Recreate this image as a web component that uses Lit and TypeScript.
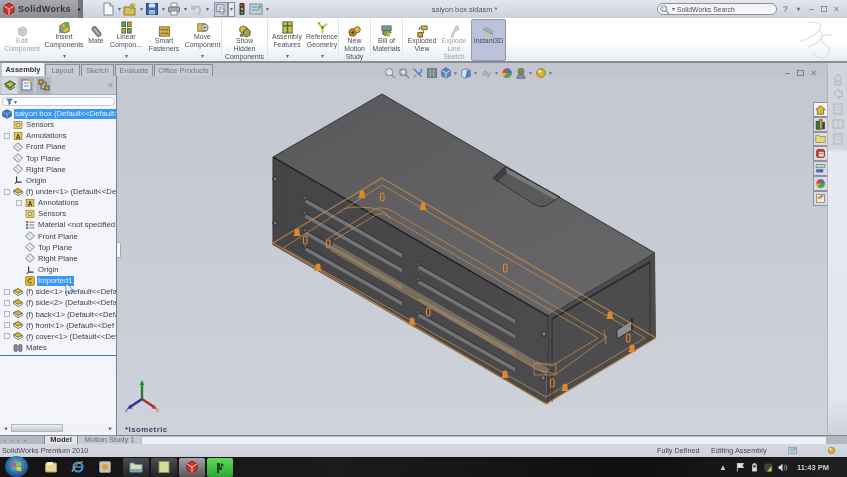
import { LitElement, html, css, svg } from "lit";
import { customElement } from "lit/decorators.js";

// small colour icons, all on a 14x14 box
const ICONS: Record<string, any> = {
  doc: svg`<path d="M3 1h6l3 3v9H3z" fill="#fbfcff" stroke="#7d8594"/><path d="M9 1v3h3" fill="#d5dbe8" stroke="#7d8594"/>`,
  open: svg`<path d="M1 5h5l1 1h5v7H1z" fill="#d9c04c" stroke="#8b7a2a"/><path d="M6 4l3-3 3 2-1 3z" fill="#7fb04a"/><circle cx="11" cy="2.5" r="1.5" fill="#e2c43e"/>`,
  save: svg`<rect x="1.5" y="1.5" width="11" height="11" fill="#3c6ab0" stroke="#28457c"/><rect x="4" y="1.5" width="6" height="4" fill="#dfe6f4"/><rect x="4" y="8" width="6" height="4.5" fill="#9db5da"/>`,
  print: svg`<path d="M4 1h6v4H4z" fill="#f2f3f6" stroke="#8c9099"/><rect x="1.5" y="5" width="11" height="5" rx="1" fill="#a4a8b2" stroke="#737780"/><path d="M4 9h6v4H4z" fill="#f0f1f4" stroke="#8c9099"/>`,
  undo: svg`<path d="M3 3v4h4M3.5 7C5 3.5 10 3.5 11 7c.6 2.2-.6 4-2 5" fill="none" stroke="#b3b8c4" stroke-width="1.6"/>`,
  select: svg`<rect x="1.5" y="2" width="9" height="8" fill="#cfd6e6" stroke="#7e8595"/><path d="M6 5l6 4-3 .6L10.6 13l-1.4.6-1.5-3.3L6 12z" fill="#f4f5f8" stroke="#555"  stroke-width=".6"/>`,
  traffic: svg`<rect x="4.5" y="1" width="5" height="12" rx="1.2" fill="#3b3b3e"/><circle cx="7" cy="3.3" r="1.3" fill="#d83a2e"/><circle cx="7" cy="7" r="1.3" fill="#d9a52c"/><circle cx="7" cy="10.7" r="1.3" fill="#45a84a"/>`,
  options: svg`<rect x="1" y="2" width="12" height="10" fill="#c3d3df" stroke="#7b8a98"/><path d="M3 5h5M3 8h7" stroke="#5e93a8"/><rect x="9" y="3.5" width="3" height="3" fill="#72ab8c"/>`,
  edit: svg`<path d="M3 4l4-2 4 2v6l-4 2-4-2z" fill="#d3d4d8" stroke="#b2b4ba"/><path d="M3 4l4 2 4-2M7 6v6" fill="none" stroke="#b2b4ba"/>`,
  insert: svg`<path d="M2 5l5-3 5 3v6l-5 2-5-2z" fill="#d9c045" stroke="#74662a"/><path d="M2 5l5 3 5-3" fill="none" stroke="#74662a"/><path d="M7 1h5v5H7z" fill="#6fa856"/><path d="M1 8h5v5H1z" fill="#5f8fc2" opacity=".8"/>`,
  mate: svg`<g transform="rotate(-40 7 7)"><rect x="4.5" y="1" width="5" height="12" rx="2.5" fill="#8d8f96" stroke="#5f6067"/><path d="M7 3v8" stroke="#c2c4ca"/></g>`,
  linear: svg`<rect x="2" y="1" width="4" height="5" fill="#67a84a" stroke="#2f6a2a"/><rect x="8" y="1" width="4" height="5" fill="#c0a83a" stroke="#6d6024"/><rect x="2" y="8" width="4" height="5" fill="#c0a83a" stroke="#6d6024"/><rect x="8" y="8" width="4" height="5" fill="#67a84a" stroke="#2f6a2a"/>`,
  smart: svg`<rect x="1.5" y="2" width="11" height="10" fill="#cfae4e" stroke="#85712c"/><path d="M3 5h8M3 9h8" stroke="#6a5a28" stroke-width="1.4" stroke-dasharray="2 1"/>`,
  move: svg`<rect x="2" y="3" width="8" height="8" fill="#ddc25c" stroke="#7b6a2a"/><circle cx="9.5" cy="7" r="3.5" fill="#e9e9ec" stroke="#666"/><path d="M9.5 5v4M7.5 7h4" stroke="#666"/>`,
  hidden: svg`<path d="M2 3l4-2 4 2v4L6 9 2 7z" fill="#d8bf4c" stroke="#6a5c25"/><path d="M6 6l4-2 3 2v5l-4 2-3-2z" fill="#a7a14c" stroke="#57522a"/><circle cx="4" cy="11" r="2" fill="#77787e"/>`,
  features: svg`<rect x="2" y="1" width="10" height="12" fill="#d3bd4c" stroke="#5e5a24"/><path d="M2 5h10M7 1v12" stroke="#3f7d3a" stroke-width="1.6"/>`,
  reference: svg`<path d="M7 7L2 2M7 7l5-4M7 7v6" stroke="#d7bf32" stroke-width="2"/><circle cx="7" cy="7" r="1.5" fill="#4f8a3c"/><path d="M2 3l3-2" stroke="#4f8a3c"/>`,
  motion: svg`<circle cx="5" cy="8" r="4" fill="#c88f2c" stroke="#6d4c17"/><circle cx="10" cy="5" r="3.2" fill="#e0bf46" stroke="#6d5a17"/><circle cx="5" cy="8" r="1.3" fill="#3e2f13"/>`,
  bom: svg`<rect x="2" y="1" width="10" height="5" fill="#8b939e" stroke="#5f6670"/><path d="M3 7l5-2 4 3-4 4-5-2z" fill="#6cab4c" stroke="#3f6d2f"/><path d="M8 8l4 1-2 4-3-2z" fill="#d4b63c"/>`,
  exploded: svg`<path d="M6 1h6v4H6z" fill="#d6bd40" stroke="#6a5e24"/><path d="M2 8h5v5H2z" fill="#c8a93a" stroke="#635520"/><path d="M3 5l2-3M8 6v3" stroke="#5a7a3a" stroke-width="1.3"/>`,
  explodeline: svg`<path d="M3 13l3-6 2-5 3-1-1 5-3 2-2 5z" fill="#d8d9de" stroke="#b5b7be"/><path d="M9 3l3 2" stroke="#bfc1c8" stroke-width="1.5"/>`,
  instant: svg`<path d="M1 3l11 6v2L1 5z" fill="#6aa6c2"/><path d="M1 5l11 6v2L1 7z" fill="#d4c75a"/><path d="M3 2l9 5" stroke="#7c8396"/>`,
  tree: svg`<path d="M2 6l5-3 5 3-5 4z" fill="#d1b63f" stroke="#3b6b34" stroke-width="1.4"/><path d="M2 8l5 4 5-3" fill="none" stroke="#3b6b34"/>`,
  prop: svg`<rect x="2" y="2" width="9" height="10" fill="#f2f3f8" stroke="#4c70a4"/><path d="M4 5h5M4 8h5" stroke="#7e8aa0"/><rect x="9" y="1" width="3" height="3" fill="#d8b63f"/>`,
  config: svg`<rect x="2" y="2" width="4" height="4" fill="#cfb13c" stroke="#5a5021"/><rect x="8" y="8" width="4" height="4" fill="#cfb13c" stroke="#5a5021"/><path d="M6 4h3v4M4 6v5h4" fill="none" stroke="#55604a"/>`,
  funnel: svg`<path d="M1 2h12L8.5 7v5L5.5 13V7z" fill="#4d86c6" stroke="#2a5b96"/>`,
  root: svg`<path d="M1 4l6-3 6 3v6l-6 3-6-3z" fill="#3f78c0" stroke="#1e4a86"/><path d="M1 4l6 3 6-3M7 7v6" fill="none" stroke="#9dc0ea"/>`,
  sensors: svg`<rect x="1.5" y="2" width="11" height="10" fill="#e5cf6b" stroke="#9a8431"/><circle cx="7" cy="7" r="2.5" fill="#f1e8b6" stroke="#7e6f35"/>`,
  annot: svg`<rect x="1.5" y="2" width="11" height="10" fill="#e2c54e" stroke="#95802a"/><text x="7" y="11" font-size="9" font-weight="700" font-family="Liberation Sans" text-anchor="middle" fill="#3c3c3c">A</text>`,
  plane: svg`<path d="M0.5 7L7 1l6.500 6L7 13z" fill="none" stroke="#7e828c" stroke-width="1.200"/><path d="M3.500 4l6.500 6.500M1.500 7l5.500 5.500M6.500 1.500L12.500 7.500" stroke="#8e9199"/>`,
  origin: svg`<path d="M5 2v8h7" fill="none" stroke="#333" stroke-width="1.6"/><path d="M5 10l-2.500 2.500" stroke="#b9372c" stroke-width="1.6"/><circle cx="5" cy="10" r="1.3" fill="#b9372c"/>`,
  part: svg`<path d="M1 5l6-3 6 4-6 3z" fill="#d4b63c" stroke="#4e4620"/><path d="M1 8l6 4 6-3M1 5v3M13 6v3" fill="none" stroke="#4e4620"/>`,
  material: svg`<path d="M6 3h7M6 7h7M6 11h7" stroke="#5c6472" stroke-width="1.2"/><rect x="1.5" y="1.5" width="3" height="3" fill="#c94a3b"/><rect x="1.5" y="5.5" width="3" height="3" fill="#4a9a4f"/><rect x="1.5" y="9.5" width="3" height="3" fill="#3f73c4"/>`,
  sketch: svg`<rect x="1" y="1" width="12" height="12" rx="1.5" fill="#e4bf2f" stroke="#7c6414"/><path d="M9.500 4.500C6 3 4 5 4.500 7.500S8 10.500 9.500 9" fill="none" stroke="#4b3c10" stroke-width="1.3"/>`,
  mates: svg`<rect x="1.5" y="2" width="4.5" height="10" rx="2" fill="#8a8c92" stroke="#55565c"/><rect x="8" y="2" width="4.5" height="10" rx="2" fill="#8a8c92" stroke="#55565c"/>`,
  zoomfit: svg`<circle cx="6" cy="6" r="4" fill="#dfe3ea" stroke="#8b909b" stroke-width="1.2"/><path d="M9 9l4 4" stroke="#8b909b" stroke-width="1.6"/>`,
  zoomarea: svg`<circle cx="6" cy="6" r="4" fill="none" stroke="#7f8794" stroke-width="1.2"/><path d="M9 9l4 4" stroke="#7f8794" stroke-width="1.6"/><rect x="4" y="4" width="4" height="4" fill="#eef0f4" stroke="#9aa0aa" stroke-width=".6"/>`,
  prev: svg`<path d="M2 2l9 9M11 2c1 4-2 6-5 6" fill="none" stroke="#4d7fb8" stroke-width="1.5"/><path d="M2 12l3-3" stroke="#8b8f99" stroke-width="1.5"/>`,
  section: svg`<rect x="2" y="2" width="10" height="10" fill="#6a90bf" stroke="#3d5f8c"/><path d="M5 2v10M9 2v10" stroke="#c9a93c" stroke-width="1.4"/>`,
  orient: svg`<path d="M2 4l5-3 5 3v6l-5 3-5-3z" fill="#5f8cc2" stroke="#3a5f90"/><path d="M2 4l5 3 5-3M7 7v6" fill="none" stroke="#d7e3f2"/>`,
  display: svg`<path d="M2 4l6-2 4 2v7l-6 2-4-2z" fill="#dfe6f0" stroke="#5c7ca8"/><path d="M8 3.500l4 .5v7l-6 2z" fill="#4f83c4"/>`,
  sphere: svg`<circle cx="7" cy="7" r="5.500" fill="#d8463a"/><path d="M7 7V1.500A5.500 5.500 0 0 1 12.500 7z" fill="#3f78c8"/><path d="M7 7h5.500A5.500 5.500 0 0 1 3 11z" fill="#4aa84c"/><path d="M7 7L3 11A5.500 5.500 0 0 1 1.500 7z" fill="#e0c23c"/>`,
  scene: svg`<circle cx="7" cy="5" r="3.500" fill="#5aa052" stroke="#c34a3c"/><path d="M2 13l2-4h6l2 4z" fill="#8690c4" stroke="#5c5f86"/>`,
  bulb: svg`<circle cx="7" cy="7" r="5" fill="#d9b22e" stroke="#8d7418"/><circle cx="5.500" cy="5" r="1.800" fill="#f7eeb0"/>`,
  home: svg`<path d="M1 7l6-5 6 5h-2v6H3V7z" fill="#d8b93f" stroke="#6f5e1e"/>`,
  lib: svg`<rect x="1.5" y="3" width="3.500" height="10" fill="#3e7e45" stroke="#1f4224"/><rect x="5.500" y="1" width="3.500" height="12" fill="#c8ad3a" stroke="#4f4518"/><rect x="9.500" y="4" width="3" height="9" fill="#33393f"/>`,
  folder: svg`<path d="M1 3h4l1 1.500h7V12H1z" fill="#ecd872" stroke="#9a8838"/>`,
  custom: svg`<rect x="2" y="2" width="10" height="10" rx="2" fill="#c9473c" stroke="#7b2a24"/><path d="M5 5h6v6H5z" fill="#e7e0de"/><path d="M6 7h4" stroke="#b33"/>`,
  list: svg`<rect x="1.5" y="2" width="11" height="4" fill="#e9edf2" stroke="#6b7686"/><rect x="1.5" y="8" width="9" height="4" fill="#3f6cbc"/><path d="M3 4h8" stroke="#79aa4e"/>`,
  pen: svg`<rect x="2" y="2" width="10" height="10" fill="#efe9dc" stroke="#85807a"/><path d="M3 6l6-4 2 2-6 4z" fill="#c98c3c"/>`,
  ghost1: svg`<path d="M4 13V6l3-4 3 4v7z" fill="none" stroke="#aeb1b9"/><rect x="3" y="8" width="8" height="3" fill="#c2c5cc"/>`,
  ghost2: svg`<path d="M3 6l5-4v2.500h3v5H8V12z" fill="none" stroke="#aeb1b9"/>`,
  ghost3: svg`<rect x="3" y="2" width="8" height="10" fill="none" stroke="#aeb1b9"/><path d="M5 5h4M5 8h4" stroke="#bdc0c7"/>`,
  ghost4: svg`<rect x="2" y="3" width="10" height="8" fill="none" stroke="#aeb1b9"/><path d="M7 3v8" stroke="#bdc0c7"/>`,
  flag: svg`<path d="M3 2v10M3 2h8l-2 2.500 2 2.500H3" fill="#e4e4e4" stroke="#e4e4e4"/>`,
  batt: svg`<rect x="4" y="3" width="6" height="9" fill="#ddd"/><rect x="5.500" y="1.500" width="3" height="2" fill="#ddd"/><rect x="5" y="4" width="4" height="3" fill="#555"/>`,
  net: svg`<rect x="2" y="2" width="10" height="10" fill="#3d4146"/><path d="M5 12l6-7v7z" fill="#d8bd2e"/>`,
  vol: svg`<path d="M2 5h2l3-3v10L4 9H2z" fill="#ddd"/><path d="M9 4c1.500 2 1.500 4 0 6M11 3c2 2.500 2 5.500 0 8" fill="none" stroke="#aaa"/>`,
  ie: svg`<circle cx="7" cy="7" r="4.500" fill="none" stroke="#3f8ed8" stroke-width="2.2"/><path d="M3 7h8" stroke="#3f8ed8" stroke-width="1.5"/><path d="M12 2C9 1 3 6 1 12" fill="none" stroke="#e5c13c"/>`,
  explorer: svg`<rect x="1.5" y="3" width="11" height="9" rx="1" fill="#e7d793" stroke="#ad9a57"/><rect x="3" y="2" width="6" height="3" fill="#f4efd8"/>`,
  media: svg`<rect x="1.5" y="1.5" width="11" height="11" rx="1.5" fill="#c9c4b8" stroke="#8d8a7f"/><circle cx="7" cy="7" r="3" fill="#e09a3a"/>`,
  files: svg`<path d="M1 3h4l1 1.500h7V12H1z" fill="#dcdca6" stroke="#6d93a8"/><rect x="1" y="9" width="12" height="3" fill="#78a8c2"/>`,
  note: svg`<rect x="2" y="1.500" width="10" height="11" fill="#d9dc96" stroke="#90935a"/>`,
  cube: svg`<path d="M2 4l5-3 5 3v6l-5 3-5-3z" fill="#d2312a" stroke="#8e1d18"/><path d="M2 4l5 3 5-3M7 7v6" fill="none" stroke="#f0c9c6"/>`,
  bucket: svg`<path d="M4 3h3v4h2v3H6v3H4z" fill="#26441f"/><circle cx="9" cy="5" r="1.500" fill="#26441f"/>`,
};

const icon = (name: string, cls = "ic") =>
  html`<svg class=${cls} viewBox="0 0 14 14">${ICONS[name]}</svg>`;

const RIBBON = [
  { icon: "edit", lines: ["Edit", "Component"], off: true },
  { icon: "insert", lines: ["Insert", "Components"], arrow: true },
  { icon: "mate", lines: ["Mate"] },
  { icon: "linear", lines: ["Linear", "Compon..."], arrow: true },
  { icon: "smart", lines: ["Smart", "Fasteners"] },
  { icon: "move", lines: ["Move", "Component"], arrow: true, end: true },
  { icon: "hidden", lines: ["Show", "Hidden", "Components"], end: true },
  { icon: "features", lines: ["Assembly", "Features"], arrow: true },
  { icon: "reference", lines: ["Reference", "Geometry"], arrow: true, end: true },
  { icon: "motion", lines: ["New", "Motion", "Study"], end: true },
  { icon: "bom", lines: ["Bill of", "Materials"], end: true },
  { icon: "exploded", lines: ["Exploded", "View"] },
  { icon: "explodeline", lines: ["Explode", "Line", "Sketch"], off: true },
  { icon: "instant", lines: ["Instant3D"], active: true },
];

const TREE: [number, string, string, boolean?, boolean?][] = [
  [0, "root", "saiyon box  (Default<<Default>", false, true],
  [1, "sensors", "Sensors"],
  [1, "annot", "Annotations", true],
  [1, "plane", "Front Plane"],
  [1, "plane", "Top Plane"],
  [1, "plane", "Right Plane"],
  [1, "origin", "Origin"],
  [1, "part", "(f) under<1>  (Default<<De", true],
  [2, "annot", "Annotations", true],
  [2, "sensors", "Sensors"],
  [2, "material", "Material <not specified"],
  [2, "plane", "Front Plane"],
  [2, "plane", "Top Plane"],
  [2, "plane", "Right Plane"],
  [2, "origin", "Origin"],
  [2, "sketch", "Imported1", false, true],
  [1, "part", "(f) side<1>  (Default<<Defa", true],
  [1, "part", "(f) side<2>  (Default<<Defa", true],
  [1, "part", "(f) back<1>  (Default<<Defa", true],
  [1, "part", "(f) front<1>  (Default<<Def", true],
  [1, "part", "(f) cover<1>  (Default<<Def", true],
  [1, "mates", "Mates"],
];

const SLOTS = [
  [305, 198], [305, 213], [305, 230], [305, 246],
  [418, 264], [418, 279], [418, 296], [418, 312],
];

// label glyphs of the sketch, page coordinates
const MARKS = [
  [362, 195], [382, 197, 1], [423, 207], [297, 233], [305, 240, 1], [328, 244, 1],
  [318, 268], [428, 312, 1], [412, 322], [505, 268, 1], [610, 316], [628, 338, 1],
  [632, 349], [565, 388], [552, 383, 1], [505, 375],
];

const model = svg`
  <defs>
    <linearGradient id="top" x1="0" y1="0" x2="1" y2="1">
      <stop offset="0" stop-color="#59595b"/><stop offset="1" stop-color="#68686a"/>
    </linearGradient>
    <linearGradient id="side" x1="0" y1="0" x2="1" y2="0">
      <stop offset="0" stop-color="#454547"/><stop offset="1" stop-color="#4b4b4d"/>
    </linearGradient>
  </defs>
  <polygon points="382,94 655,253 548,316 273,157" fill="url(#top)"/>
  <polygon points="273,157 548,316 546,404 273,245" fill="url(#side)"/>
  <polygon points="548,316 655,253 656,338 546,404" fill="#4c4c4e"/>
  <polygon points="493,178 505,167 560,197 543,207" fill="#59595b"/>
  <polygon points="505,167 560,197 556,200 507,173" fill="#7b7b7d"/>
  <polygon points="493,178 505,167 507,173 497,182" fill="#3f3f41"/>
  <path d="M493 178L505 167L560 197L546 206Q540 208 534 204L493 178" fill="none" stroke="#303032"/>
  ${SLOTS.map(([x, y]) => svg`
    <polygon points="${x},${y} ${x + 97},${y + 55} ${x + 97},${y + 60} ${x},${y + 5}" fill="#737375"/>
    <path d="M${x} ${y}L${x + 97} ${y + 55}" stroke="#303032"/>
    <path d="M${x} ${y + 5}L${x + 97} ${y + 60}" stroke="#404042" stroke-width=".7"/>
    <circle cx=${x} cy=${y} r="2.200" fill="#59595b" stroke="#303032" stroke-width=".8"/>
  `)}
  <polygon points="617,330 632,320 632,330 617,339" fill="#8c8c8e" stroke="#2f2f31"/>
  <path d="M632 318v14" stroke="#242426" stroke-width="1.5"/>
  <g fill="#77787a" stroke="#262628">
    <circle cx="275" cy="179" r="2.200"/><circle cx="275" cy="223" r="2.200"/>
    <circle cx="544" cy="334" r="2.400"/><circle cx="543" cy="378" r="2.400"/>
  </g>
  <path d="M273 157L382 94L655 253L548 316Z" fill="none" stroke="#353537"/>
  <path d="M273 157L548 316" stroke="#1f1f21" stroke-width="1.3"/>
  <path d="M552 319L650 262" stroke="#2a2a2c" stroke-width="2"/>
  <path d="M552 319V402M650 260V340M548 316V404M273 157V245" stroke="#2e2e30"/>
  <path d="M332 246L548 372" stroke="#99866a" stroke-width="7" opacity=".6"/>
  <g fill="none" stroke="#cf8d45" opacity=".75">
    <path d="M273 243L382 178L656 338L546 404Z" stroke-width="1.3"/>
    <path d="M283 248L382 185L645 338L546 397L283 248"/>
    <path d="M326 240L373 210Q382 205 392 211L607 337L556 374L538 370L330 250"/>
    <path d="M334 240L376 215Q382 212 388 216L598 338L552 366L536 362"/>
    <path d="M340 213Q341 207 358 207Q386 207 390 219"/>
    <path d="M534 364h22v11h-22zM604 330l2 14"/>
  </g>
  <g fill="#dc8a2e">
    ${MARKS.map(([x, y, v]) => v
      ? svg`<rect x=${x - 1.5} y=${y - 4} width="3.500" height="8" rx="1.500" fill="none" stroke="#dc8a2e" stroke-width="1.100"/>`
      : svg`<path d="M${x - 4} ${y + 3}h8l-1.500-2v-3a2.500 2.500 0 0 0-5 0v3z"/>`)}
  </g>
  <g stroke-width="2.400" fill="none">
    <path d="M142 399V384" stroke="#2c7a34"/>
    <path d="M142 399L154 407" stroke="#a83232"/>
    <path d="M142 399L130 407" stroke="#2e2f9a"/>
  </g>
  <path d="M142 380l-2.500 5h5z" fill="#2c8a34"/>
  <path d="M157 409l-5.500-.5 2.500-4z" fill="#c03a3a"/>
  <path d="M127 409l5.500-.5-2.500-4z" fill="#3335b0"/>
  <text x="125" y="412" font-size="6" fill="#4a4ad0" font-family="Liberation Sans">z</text>
  <text x="156" y="412" font-size="6" fill="#c04a4a" font-family="Liberation Sans">x</text>
`;

@customElement("app-root")
export class AppRoot extends LitElement {
  static styles = css`
    :host { display: block; width: 847px; height: 477px; overflow: hidden; font-family: "Liberation Sans", Arial, sans-serif; color: #444; }
    .app { display: flex; flex-direction: column; height: 477px; filter: blur(0.45px); background: #c8ccd4; }
    .ic { width: 14px; height: 14px; display: block; flex: none; }
    .caret { font-size: 6px; color: #666; line-height: 1; }

    .titlebar { height: 18px; flex: none; display: flex; align-items: center; background: linear-gradient(#e4e7f1, #cdd1dd); }
    .logo { width: 78px; height: 18px; display: flex; align-items: center; gap: 2px; padding-left: 2px; box-sizing: border-box; background: linear-gradient(#a9a9ae, #8d8e93); font-size: 9px; font-weight: 700; letter-spacing: 0.35px; color: #35353a; }
    .logo-arrow { width: 5px; height: 18px; margin-right: 18px; background: #75767c; color: #222; font-size: 6px; line-height: 18px; }
    .qa { width: 22px; display: flex; align-items: center; gap: 1px; }
    .qa .caret { margin-left: 2px; }
    .qa-select { width: 14px; height: 15px; margin-left: 3px; background: #c5cbdc; border: 1px solid #8b909c; box-sizing: border-box; display: flex; align-items: center; justify-content: center; }
    .qa-select .ic { width: 12px; height: 12px; }
    .qa-drop { width: 7px; height: 15px; box-sizing: border-box; border: 1px solid #8b909c; background: #e7e9f0; display: flex; align-items: center; justify-content: center; }
    .qa-plain { width: 14px; display: flex; }
    .qa-end { width: 9px; text-align: center; }
    .doc-title { flex: 1; text-align: center; font-size: 7.4px; color: #55565c; }
    .search { width: 120px; height: 12px; box-sizing: border-box; border: 1px solid #8d919c; border-radius: 6px; background: linear-gradient(#f0f1f6, #fcfcfe); display: flex; align-items: center; gap: 2px; padding-left: 1px; font-size: 6.8px; color: #4c4c50; margin-right: 2px; }
    .search .ic { width: 11px; height: 11px; }
    .winbtns { display: flex; align-items: center; color: #8a8e98; width: 68px; font-size: 9px; font-weight: 700; }
    .winbtns span { width: 13px; text-align: center; }
    .restore { width: 6px !important; height: 6px; border: 1px solid #8a8e98; margin: 0 3px; box-sizing: border-box; }

    .ribbon { height: 45px; flex: none; position: relative; display: grid; grid-template-columns: 44px 40px 24px 36px 40px 38px 46px 38px 33px 32px 32px 38px 26px 35px; background: linear-gradient(#fff 55%, #e8ebf3); border-bottom: 2px solid #888b93; box-sizing: border-box; }
    .btn { display: flex; flex-direction: column; align-items: center; padding-top: 7px; font-size: 6.9px; line-height: 8px; text-align: center; color: #505055; white-space: nowrap; position: relative; box-sizing: border-box; height: 43px; }
    .btn .ic { margin-bottom: -1px; width: 13px; height: 13px; }
    .btn.has-arrow { padding-top: 3px; }
    .btn.off { color: #a3a4a9; }
    .btn.end { border-right: 1px solid #e1e3ea; }
    .btn.active { margin-left: 4px; width: 35px; top: 1px; height: 42px; border: 1px solid #9096ae; border-radius: 2px; background: #bcc2dc; padding-top: 5px; color: #47484f; }
    .btn .caret { position: absolute; bottom: 2px; left: 0; right: 0; }
    .ds { position: absolute; right: 12px; top: 0; width: 40px; height: 43px; }

    .work { flex: 1; display: flex; min-height: 0; }
    .work-main { flex: 1; display: flex; flex-direction: column; min-width: 0; }
    .tabs { height: 13px; flex: none; display: flex; align-items: flex-end; padding-left: 2px; gap: 1px; background: #c2c5cd; position: relative; z-index: 1; }
    .tab { height: 12px; line-height: 12px; box-sizing: border-box; text-align: center; font-size: 7.4px; color: #77787e; background: #c9ccd3; border: 1px solid #8a8d95; border-bottom: 0; }
    .tab.on { background: #f4f5f9; color: #33343a; font-weight: 700; height: 13px; border: 0; line-height: 14px; }
    .hud { position: absolute; left: 384px; top: 3px; height: 14px; display: flex; align-items: center; gap: 2px; }
    .hud .ic { width: 12px; height: 12px; }
    .hud .caret { width: 4px; color: #7a7d85; }
    .hud em { width: 13px; font-size: 8px; color: #8a8d96; text-align: center; }
    .docbtns { position: absolute; left: 785px; top: 4px; height: 12px; display: flex; gap: 7px; align-items: center; font-size: 9px; font-weight: 700; color: #7d818b; }
    .docbtns i { display: block; width: 7px; height: 6px; border: 1px solid #7d818b; box-sizing: border-box; }
    .main { flex: 1; display: flex; min-height: 0; position: relative; }

    .panel { width: 117px; flex: none; box-sizing: border-box; border-right: 1px solid #7e818a; background: #f3f5fb; display: flex; flex-direction: column; }
    .panel-tabs { height: 19px; flex: none; display: flex; align-items: center; gap: 2px; padding-left: 2px; background: #c6c9d1; border-bottom: 1px solid #a9acb5; box-sizing: border-box; position: relative; }
    .panel-tabs span { width: 15px; height: 17px; display: flex; align-items: center; justify-content: center; background: #b3b6c0; }
    .panel-tabs span.on { background: #d5d8df; }
    .panel-tabs b { margin-left: auto; margin-right: 3px; font-size: 9px; color: #7c7f88; font-weight: 400; }
    .filter { height: 9px; margin: 2px 1px 2px 2px; flex: none; background: #fff; border-radius: 4px; border: 1px solid #c8cbd3; box-sizing: border-box; display: flex; align-items: center; padding-left: 3px; font-size: 6px; color: #333; gap: 1px; }
    .filter .ic { width: 7px; height: 7px; }
    .tree { flex: none; overflow: hidden; border-bottom: 1px solid #4f74a8; padding-bottom: 2px; }
    .row { height: 11.15px; display: flex; align-items: center; font-size: 7.7px; color: #3d3e44; white-space: nowrap; }
    .gutter { flex: none; display: flex; justify-content: flex-end; padding-right: 3px; box-sizing: border-box; }
    .l0 { width: 2px; padding-right: 0; }
    .l1 { width: 13px; }
    .l2 { width: 25px; }
    .exp { width: 6px; height: 6px; box-sizing: border-box; border: 1px solid #b3b6c0; background: #f3f5fb; }
    .row .ic { width: 10px; height: 10px; margin-right: 3px; }
    .row .sel { background: #3797f2; color: #e6f0ff; padding: 0 1px; margin-left: -1px; line-height: 10px; flex: 1; }
    .row .sel.fit { flex: none; }
    .spacer { flex: 1; }
    .hscroll { height: 9px; flex: none; margin: 0 0 3px; display: flex; align-items: center; font-size: 6px; color: #555; background: #f0f1f6; }
    .hscroll i { font-style: normal; width: 11px; text-align: center; }
    .thumb { width: 52px; height: 8px; background: linear-gradient(#eceef2, #c6c9d0); border: 1px solid #b4b7be; box-sizing: border-box; }

    .viewport { flex: 1; position: relative; overflow: hidden; background: linear-gradient(#c3c7cf, #c9cdd5 60%, #ced2da); }
    .canvas { position: absolute; left: 0; top: 0; width: 710px; height: 359px; }
    .iso { position: absolute; left: 8px; bottom: 1px; font-size: 7.8px; font-weight: 700; letter-spacing: 0.5px; color: #3f4060; }
    .splitter { position: absolute; left: 0; top: 166px; width: 4px; height: 16px; background: #f5f6fa; border: 1px solid #a4a7b0; border-left: 0; box-sizing: border-box; border-radius: 0 2px 2px 0; }
    .cursor { position: absolute; left: 65px; top: 206px; width: 9px; height: 13px; }
    .taskstack { position: absolute; right: 0; top: 26px; display: flex; flex-direction: column; }
    .taskstack span { width: 14px; height: 14.8px; box-sizing: border-box; display: flex; align-items: center; justify-content: center; background: #d9dbe4; border: 1px solid #8f929b; border-right: 0; }
    .taskstack span:first-child { background: #f4f2ea; }
    .taskstack .ic { width: 11px; height: 11px; }

    .taskpane { width: 20px; flex: none; display: flex; flex-direction: column; align-items: center; gap: 1px; padding-top: 9px; box-sizing: border-box; background: linear-gradient(#d2d5dc 23%, #e7e9f3 24%, #e4e6ee 90%, #cfd2d9); border-left: 1px solid #b4b7bf; }

    .sheetbar { height: 9px; flex: none; display: flex; align-items: stretch; background: #b5b7be; border-top: 1px solid #84878f; box-sizing: border-box; font-size: 7.5px; }
    .sheetnav { width: 42px; padding-left: 3px; display: flex; gap: 4px; color: #8f9198; font-size: 5px; line-height: 8px; box-sizing: border-box; }
    .sheet { padding: 0 2px; line-height: 8px; text-align: center; box-sizing: border-box; color: #6b6c72; background: #c8cad1; border-left: 1px solid #84878f; white-space: nowrap; }
    .sheet.on { width: 33px; margin-left: 2px; background: #e5e6ea; color: #2f3036; font-weight: 700; }
    .sheet.motion { width: 64px; }
    .sheetfill { flex: 1; margin: 1px 21px 0 1px; background: #f0f1f7; }

    .statusbar { height: 13px; flex: none; display: flex; align-items: center; padding: 0 10px 0 2px; background: linear-gradient(#d7d9e2, #cfd1da); font-size: 7.3px; color: #45464c; }
    .statusbar .grow { flex: 1; }
    .statusbar .ic { width: 9px; height: 9px; }
    .st-a { width: 54px; }
    .st-b { width: 77px; }
    .st-c { width: 39px; }
    .st-d { width: 10px; }

    .taskbar { height: 20px; flex: none; display: flex; align-items: center; background: linear-gradient(90deg, #141416, #1b1b1d 40%, #0f0f11 75%, #202023); color: #d9d9d9; }
    .orb { width: 23px; height: 21px; margin: -1px 0 0 5px; border-radius: 50%; background: radial-gradient(circle at 50% 40%, #6fb1dc, #1f5d90 65%, #0c2c4d); display: flex; align-items: center; justify-content: center; flex: none; }
    .orb svg { width: 11px; height: 11px; }
    .pin { width: 27px; display: flex; justify-content: center; flex: none; }
    .pins { margin-left: 9px; display: flex; width: 86px; }
    .win { width: 26px; height: 19px; margin-right: 2px; border-radius: 2px; display: flex; align-items: center; justify-content: center; background: linear-gradient(#4c4c50, #232326); flex: none; }
    .win.red { background: linear-gradient(#a5a5a8, #56565a); }
    .win.green { background: linear-gradient(#5fd85a, #2da838); }
    .tray { margin-left: auto; display: flex; align-items: center; gap: 3px; padding-right: 18px; font-size: 7.5px; font-weight: 700; color: #d0d0d2; }
    .tray .ic { width: 11px; height: 11px; }
    .tray .more { margin-right: 7px; }
    .tray time { margin-left: 6px; }
  `;

  private renderRibbon() {
    return RIBBON.map((b) => html`
      <div class="btn ${b.arrow ? "has-arrow" : ""} ${b.off ? "off" : ""} ${b.end ? "end" : ""} ${b.active ? "active" : ""}">
        ${icon(b.icon)}
        ${b.lines.map((l) => html`<span>${l}</span>`)}
        ${b.arrow ? html`<span class="caret">▾</span>` : ""}
      </div>
    `);
  }

  private renderTree() {
    return TREE.map(([level, ic, label, expander, selected]) => html`
      <div class="row">
        <span class="gutter l${level}">${expander ? html`<span class="exp"></span>` : ""}</span>
        ${icon(ic)}
        ${selected
          ? html`<span class="sel ${level === 2 ? "fit" : ""}">${label}</span>`
          : html`<span>${label}</span>`}
      </div>
    `);
  }

  render() {
    return html`
      <div class="app">
        <div class="titlebar">
          <div class="logo">${icon("cube")}<span>SolidWorks</span></div>
          <div class="logo-arrow">▸</div>
          ${["doc", "open", "save", "print", "undo"].map((n) => html`<div class="qa">${icon(n)}<span class="caret">▾</span></div>`)}
          <div class="qa-select">${icon("select")}</div>
          <div class="qa-drop"><span class="caret">▾</span></div>
          <div class="qa-plain">${icon("traffic")}</div>
          <div class="qa-plain">${icon("options")}</div>
          <span class="caret qa-end">▾</span>
          <div class="doc-title">saiyon box.sldasm *</div>
          <div class="search">${icon("zoomarea")}<span class="caret">▾</span><span>SolidWorks Search</span></div>
          <div class="winbtns"><span>?</span><span class="caret">▾</span><span>–</span><span class="restore"></span><span>×</span></div>
        </div>

        <div class="ribbon">
          ${this.renderRibbon()}
          <svg class="ds" viewBox="0 0 44 43" fill="none" stroke="#dfe2e9" stroke-width="1.5">
            <path d="M14 3C24 1 32 4 27 11S14 20 6 24M27 12C33 16 28 26 14 30"/>
            <path d="M41 17C33 14 26 19 30 24S42 30 36 38 26 41 20 38"/>
          </svg>
        </div>

        <div class="work">
          <div class="work-main">
            <div class="tabs">
              <div class="tab on" style="width:42px">Assembly</div>
              <div class="tab" style="width:35px">Layout</div>
              <div class="tab" style="width:33px">Sketch</div>
              <div class="tab" style="width:38px">Evaluate</div>
              <div class="tab" style="width:59px">Office Products</div>
              <div class="hud">
                ${icon("zoomfit")}${icon("zoomarea")}${icon("prev")}${icon("section")}
                ${icon("orient")}<span class="caret">▾</span>
                ${icon("display")}<span class="caret">▾</span>
                <em>δγ</em><span class="caret">▾</span>
                ${icon("sphere")}${icon("scene")}<span class="caret">▾</span>
                ${icon("bulb")}<span class="caret">▾</span>
              </div>
              <div class="docbtns"><span>–</span><i></i><span>×</span></div>
            </div>
            <div class="main">
              <div class="panel">
                <div class="panel-tabs">
                  <span class="on">${icon("tree")}</span><span>${icon("prop")}</span><span>${icon("config")}</span><b>»</b>
                </div>
                <div class="filter">${icon("funnel")}<span class="caret">▾</span></div>
                <div class="tree">${this.renderTree()}</div>
                <div class="spacer"></div>
                <div class="hscroll"><i>◂</i><div class="thumb"></div><div class="spacer"></div><i>▸</i></div>
              </div>
              <div class="viewport">
                <svg class="canvas" viewBox="117 76 710 359">${model}</svg>
                <div class="splitter"></div>
                <div class="iso">*Isometric</div>
                <div class="taskstack">
                  ${["home", "lib", "folder", "custom", "list", "sphere", "pen"].map((n) => html`<span>${icon(n)}</span>`)}
                </div>
              </div>
              <svg class="cursor" viewBox="0 0 9 13">
                <path d="M1 1v10l2.500-2.200L5 12l2-.8-1.500-3H8.500z" fill="#f4f8fc" stroke="#2d5f96" stroke-width=".7"/>
              </svg>
            </div>
          </div>
          <div class="taskpane">
            ${["ghost1", "ghost2", "ghost3", "ghost4", "ghost3"].map((n) => icon(n))}
          </div>
        </div>

        <div class="sheetbar">
          <div class="sheetnav"><span>◂</span><span>◂</span><span>▸</span><span>▸</span></div>
          <div class="sheet on">Model</div>
          <div class="sheet motion">Motion Study 1</div>
          <div class="sheetfill"></div>
        </div>

        <div class="statusbar">
          <span class="grow">SolidWorks Premium 2010</span>
          <span class="st-a">Fully Defined</span>
          <span class="st-b">Editing Assembly</span>
          <span class="st-c">${icon("options")}</span>
          <span class="st-d">${icon("bulb")}</span>
        </div>

        <div class="taskbar">
          <div class="orb">
            <svg viewBox="0 0 14 14">
              <path d="M1 3l5-1v4.500H1z" fill="#e2553f"/><path d="M7 2l6-1v5.500H7z" fill="#8cc24c"/>
              <path d="M1 7.500h5V12l-5-1z" fill="#4f9be0"/><path d="M7 7.500h6V13l-6-1z" fill="#eec53c"/>
            </svg>
          </div>
          <div class="pins">
            <div class="pin">${icon("explorer")}</div>
            <div class="pin">${icon("ie")}</div>
            <div class="pin">${icon("media")}</div>
          </div>
          <div class="win">${icon("files")}</div>
          <div class="win">${icon("note")}</div>
          <div class="win red">${icon("cube")}</div>
          <div class="win green">${icon("bucket")}</div>
          <div class="tray">
            <span class="more">▴</span>${icon("flag")}${icon("batt")}${icon("net")}${icon("vol")}
            <time>11:43 PM</time>
          </div>
        </div>
      </div>
    `;
  }
}
